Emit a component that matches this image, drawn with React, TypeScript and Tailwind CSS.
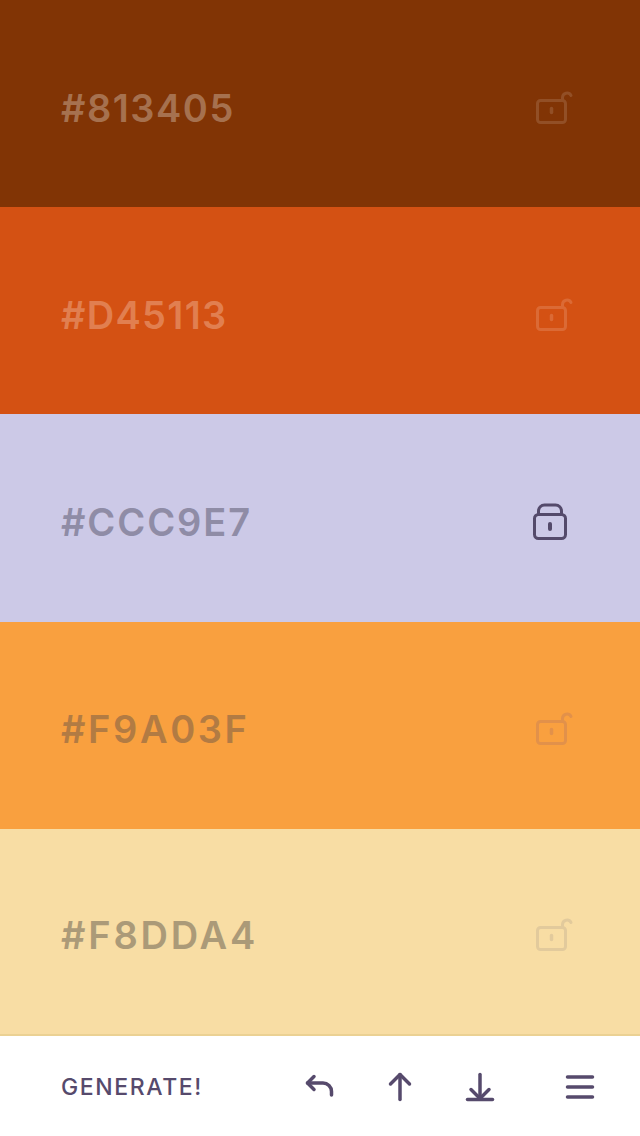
import React from 'react'

interface ISwatchProps {
  hex: string
  bg: string
  textColor: string
  lockColor: string
  tracking: string
  locked?: boolean
  last?: boolean
}

const font = { label: "font-['Inter',sans-serif]" }

const LockIcon = ({ locked, color }: { locked?: boolean; color: string }) => {
  return (
    <svg width="44" height="40" viewBox="0 0 44 40" fill="none" stroke={color} strokeWidth="3" strokeLinecap="round" strokeLinejoin="round">
      {locked ? (
        <>
          <rect x="4.500" y="12.500" width="31" height="24" rx="4" />
          <path d="M8.500 12.500V9a6 6 0 0 1 6-6h11a6 6 0 0 1 6 6v3.500" />
          <path d="M20 22v5" strokeWidth="4" />
        </>
      ) : (
        <>
          <rect x="7.500" y="12.500" width="28" height="22" rx="3" />
          <path d="M32.500 12V9.500a4.500 4.500 0 0 1 8.500-2" />
          <path d="M21.500 20.500v4" strokeWidth="3.500" />
        </>
      )}
    </svg>
  )
}

const Swatch = (props: ISwatchProps) => {
  return (
    <div
      className={`flex items-center justify-between pt-2 pl-[61px] pr-[66px] ${props.last ? 'border-b-2 border-[#ebd193]' : ''}`}
      style={{ backgroundColor: props.bg }}
    >
      <span className={`${font.label} ${props.tracking} text-[38px] font-semibold leading-none`} style={{ color: props.textColor }}>
        {props.hex}
      </span>
      <LockIcon locked={props.locked} color={props.lockColor} />
    </div>
  )
}

const swatches: ISwatchProps[] = [
  { hex: '#813405', bg: '#813405', textColor: '#a6714f', lockColor: '#924f26', tracking: 'tracking-[1.5px]' },
  { hex: '#D45113', bg: '#d45113', textColor: '#e17f50', lockColor: '#db6a35', tracking: 'tracking-[1.3px]' },
  { hex: '#CCC9E7', bg: '#ccc9e7', textColor: '#8f8ca6', lockColor: '#544a6b', tracking: 'tracking-[1.9px]', locked: true },
  { hex: '#F9A03F', bg: '#f9a03f', textColor: '#b27b43', lockColor: '#e2914a', tracking: 'tracking-[2.6px]' },
  { hex: '#F8DDA4', bg: '#f8dda4', textColor: '#ab9a78', lockColor: '#e2ca9c', tracking: 'tracking-[2.8px]', last: true },
]

export default function App() {
  return (
    <div className="grid h-screen w-full grid-rows-[repeat(5,minmax(0,1fr))_100px] bg-white">
      {swatches.map((s) => (
        <Swatch key={s.hex} {...s} />
      ))}
      <div className="flex items-center pt-[3px] pl-[61px]">
        <span className={`${font.label} w-[239px] text-[23px] font-medium tracking-[1.6px] text-[#564a6c]`}>GENERATE!</span>
        <div className="flex gap-10">
          <svg width="40" height="40" viewBox="0 0 40 40" fill="none" stroke="#564a6c" strokeWidth="3.5" strokeLinecap="round" strokeLinejoin="round">
            <path d="M14 9.500L7.500 16l6.500 6.500" />
            <path d="M7.500 16H23a8.500 8.500 0 0 1 8.500 8.500V28" />
          </svg>
          <svg width="40" height="40" viewBox="0 0 40 40" fill="none" stroke="#564a6c" strokeWidth="3.5" strokeLinecap="round" strokeLinejoin="round">
            <path d="M20 7.500v25" />
            <path d="M10.500 17L20 7.500l9.500 9.500" />
          </svg>
          <svg width="40" height="40" viewBox="0 0 40 40" fill="none" stroke="#564a6c" strokeWidth="3.500" strokeLinecap="round" strokeLinejoin="round">
            <path d="M20 7.500v24" />
            <path d="M11 22.500l9 9 9-9" />
            <path d="M7.500 32.500h25" />
          </svg>
        </div>
        <svg className="ml-[60px]" width="40" height="40" viewBox="0 0 40 40" fill="none" stroke="#564a6c" strokeWidth="3.5" strokeLinecap="round">
          <path d="M7.500 10h25" />
          <path d="M7.500 20h25" />
          <path d="M7.500 30h25" />
        </svg>
      </div>
    </div>
  )
}
